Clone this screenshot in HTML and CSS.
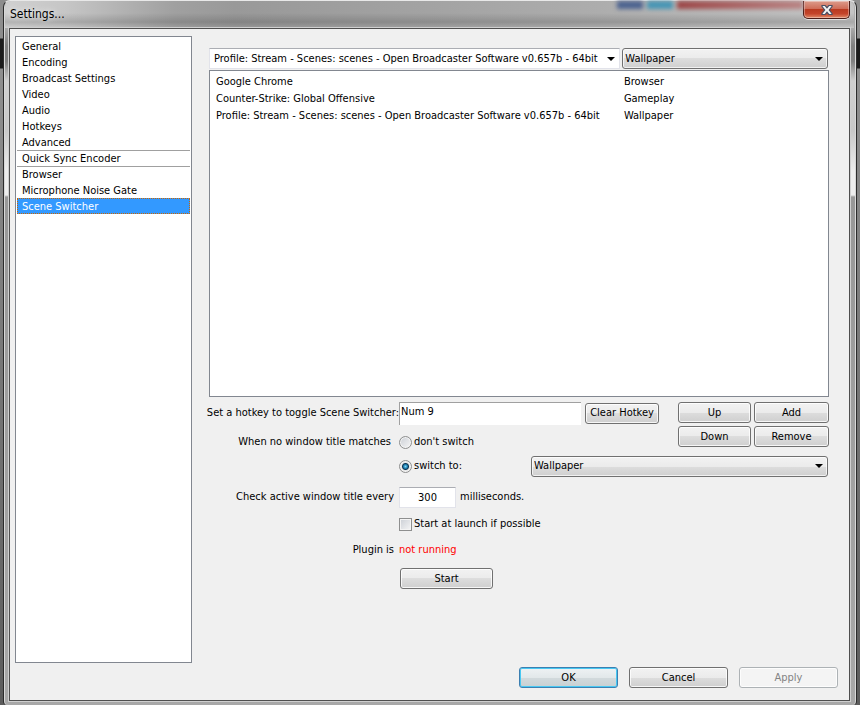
FILE: index.html
```html
<!DOCTYPE html>
<html lang="en">

<head>
    <meta charset="utf-8">
    <meta name="viewport" content="width=device-width, initial-scale=1.0">
    <title>Settings</title>
    <link rel="stylesheet" href="styles.css">
</head>

<body>
    <div class="window">
        <header class="titlebar">
            <h1>Settings...</h1>
            <div class="glow">
                <span class="glow-blue"></span>
                <span class="glow-teal"></span>
                <span class="glow-red"></span>
            </div>
            <button class="close" type="button" aria-label="Close">
                <svg width="14" height="12" viewBox="0 0 14 12">
                    <path d="M2 1.5h3.2L7 3.7l1.8-2.2H12v1L9.3 6l2.7 3.5v1H8.8L7 8.3l-1.8 2.2H2v-1L4.7 6 2 2.5z" fill="#f4f4f4" stroke="#4a4f63" stroke-width="1.2" />
                </svg>
            </button>
        </header>

        <form class="client">
            <div class="content">
                <nav class="sidebar">
                    <a href="#">General</a>
                    <a href="#">Encoding</a>
                    <a href="#">Broadcast Settings</a>
                    <a href="#">Video</a>
                    <a href="#">Audio</a>
                    <a href="#">Hotkeys</a>
                    <a href="#">Advanced</a>
                    <a href="#" class="separated">Quick Sync Encoder</a>
                    <a href="#">Browser</a>
                    <a href="#">Microphone Noise Gate</a>
                    <a href="#" class="selected">Scene Switcher</a>
                </nav>

                <main class="panel">
                    <div class="pickers">
                        <select class="combo flat" aria-label="Window">
                            <option>Profile: Stream - Scenes: scenes - Open Broadcaster Software v0.657b - 64bit</option>
                        </select>
                        <select class="combo" aria-label="Scene">
                            <option>Wallpaper</option>
                        </select>
                    </div>

                    <div class="list">
                        <table>
                            <tr>
                                <td>Google Chrome</td>
                                <td>Browser</td>
                            </tr>
                            <tr>
                                <td>Counter-Strike: Global Offensive</td>
                                <td>Gameplay</td>
                            </tr>
                            <tr>
                                <td>Profile: Stream - Scenes: scenes - Open Broadcaster Software v0.657b - 64bit</td>
                                <td>Wallpaper</td>
                            </tr>
                        </table>
                    </div>

                    <div class="top">
                        <div class="rows">
                            <div class="row">
                                <label class="caption tight" for="hotkey">Set a hotkey to toggle Scene Switcher:</label>
                                <input class="hotkey" id="hotkey" type="text" value="Num 9">
                                <button class="clear" type="button">Clear Hotkey</button>
                            </div>
                            <div class="row">
                                <span class="caption wide">When no window title matches</span>
                                <label class="choice"><input type="radio" name="nomatch">don't switch</label>
                            </div>
                        </div>
                        <div class="actions">
                            <button type="button">Up</button>
                            <button type="button">Add</button>
                            <button type="button">Down</button>
                            <button type="button">Remove</button>
                        </div>
                    </div>

                    <div class="row">
                        <span class="caption"></span>
                        <label class="choice switch"><input type="radio" name="nomatch" checked>switch to:</label>
                        <select class="combo target" aria-label="Switch to scene">
                            <option>Wallpaper</option>
                        </select>
                    </div>
                    <div class="row interval">
                        <label class="caption" for="interval">Check active window title every</label>
                        <input class="number" id="interval" type="text" value="300">
                        <span>milliseconds.</span>
                    </div>
                    <div class="row">
                        <span class="caption"></span>
                        <label class="choice"><input type="checkbox">Start at launch if possible</label>
                    </div>
                    <div class="row">
                        <span class="caption">Plugin is</span>
                        <span class="status">not running</span>
                    </div>
                    <div class="row">
                        <span class="caption"></span>
                        <button class="start" type="button">Start</button>
                    </div>
                </main>
            </div>

            <footer class="buttons">
                <button class="default" type="button">OK</button>
                <button type="button">Cancel</button>
                <button type="button" disabled>Apply</button>
            </footer>
        </form>
    </div>
</body>

</html>
```
FILE: styles.css
```css
* {
    box-sizing: border-box;
}

body {
    margin: 0;
    height: 100vh;
    padding: 0 3px;
    background: linear-gradient(#8d8d8d 0, #8d8d8d 38px, #1c1c1c 39px, #1c1c1c 68px, #8f8f8f 69px, #858585 190px, #5c5c5c 100%);
    font-family: Tahoma, "DejaVu Sans Condensed", "DejaVu Sans", sans-serif;
    font-size: 11px;
    line-height: 16px;
    color: #000;
}

/* glass frame */
.window {
    height: 100%;
    display: flex;
    flex-direction: column;
    padding: 0 6px 4px 5px;
    border: 1px solid #2b2b2b;
    border-top-color: #e8e8e8;
    border-bottom: 0;
    border-radius: 7px 7px 4px 4px;
    background: linear-gradient(#b4b4b4 0, #a8a8a8 28px, #808080 45px, #808080 60px, #d0d0d0 80px, #c8c8c8 130px, #ededed 170px, #ededed 194px, #989898 196px, #a8a8a8 100%);
    box-shadow: inset 1px 0 #d8d8d8, inset -1px 0 #d8d8d8;
}

.titlebar {
    height: 27px;
    flex: none;
    margin: 0 -4px;
    padding-left: 5px;
    display: flex;
    align-items: flex-start;
    border-radius: 6px 6px 0 0;
    background:
        linear-gradient(transparent 12px, rgba(0, 0, 0, .14) 21px, transparent 27px),
        linear-gradient(90deg, #d0d0d0, #c6c6c6 60px, #a0a0a0 170px, #999999 230px, #a3a3a3 50%, #adadad 70%, #c4c4c4);
}

.titlebar h1 {
    margin: 0;
    font-size: 12px;
    font-weight: normal;
    line-height: 26px;
    text-shadow: 0 0 6px #fff;
}

.glow {
    display: flex;
    flex: 1;
    gap: 4px;
    justify-content: flex-end;
    height: 8px;
    filter: blur(2px);
}

.glow-blue {
    width: 26px;
    background: #4d6390;
}

.glow-teal {
    width: 26px;
    background: #4796b5;
}

.glow-red {
    width: 126px;
    background: linear-gradient(90deg, #9c4546, #b98484);
}

.close {
    width: 47px;
    height: 18px;
    margin-right: 4px;
    padding: 0;
    display: flex;
    align-items: center;
    justify-content: center;
    border: 1px solid #4b1d18;
    border-top: 0;
    border-radius: 0 0 5px 5px;
    background: linear-gradient(#dc9c8c, #cf6d58 45%, #b93a20 50%, #c4442a 75%, #e08a68);
    box-shadow: inset 0 0 0 1px rgba(255, 255, 255, .35), 0 1px rgba(255, 255, 255, .6);
}

.client {
    flex: 1;
    display: flex;
    flex-direction: column;
    gap: 4px;
    padding: 7px 11px 12px 5px;
    border: 1px solid #4f4f4f;
    background: #f0f0f0;
    box-shadow: 0 0 0 1px #cfcfcf;
}

.content {
    flex: 1;
    display: flex;
    gap: 17px;
}

.sidebar {
    width: 177px;
    padding: 1px;
    border: 1px solid #828790;
    background: #fff;
}

.sidebar a {
    display: block;
    height: 16px;
    padding: 1px 0 0 5px;
    color: #000;
    text-decoration: none;
}

.sidebar .separated {
    box-shadow: inset 0 1px #a0a0a0, 0 1px #a0a0a0;
}

.sidebar .selected {
    padding: 0 0 0 4px;
    border: 1px dotted #cc6600;
    background: #3399ff;
    color: #fff;
}

.panel {
    flex: 1;
    padding: 12px 9px 0 0;
}

button {
    height: 21px;
    padding: 0;
    border: 1px solid #707070;
    border-radius: 3px;
    background: linear-gradient(#f2f2f2, #ebebeb 50%, #dddddd 50%, #cfcfcf);
    box-shadow: inset 0 0 0 1px rgba(255, 255, 255, .8);
    font: inherit;
    color: #000;
}

button:disabled {
    border-color: #adb2b5;
    background: #f4f4f4;
    color: #838383;
}

input[type="text"] {
    font: inherit;
    color: #000;
    background: #fff;
}

.combo {
    appearance: none;
    height: 21px;
    padding: 0 20px 0 2px;
    border: 1px solid #707070;
    border-radius: 3px;
    background:
        url("data:image/svg+xml,%3Csvg xmlns='http://www.w3.org/2000/svg' width='8' height='4'%3E%3Cpath d='M0 0h8L4 4z'/%3E%3C/svg%3E") no-repeat right 4px center,
        linear-gradient(#f2f2f2, #ebebeb 50%, #dddddd 50%, #cfcfcf);
    box-shadow: inset 0 0 0 1px rgba(255, 255, 255, .7);
    font: inherit;
    color: #000;
}

.flat {
    padding-left: 4px;
    border-color: #abadb3 #e2e3ea #e2e3ea;
    border-radius: 0;
    background-color: #fff;
    background-image: url("data:image/svg+xml,%3Csvg xmlns='http://www.w3.org/2000/svg' width='8' height='4'%3E%3Cpath d='M0 0h8L4 4z'/%3E%3C/svg%3E");
}

.pickers {
    display: grid;
    grid-template-columns: 2fr 1fr;
    gap: 2px;
    padding-right: 1px;
}

.list {
    height: 327px;
    margin: 1px 0 4px;
    padding-top: 2px;
    border: 1px solid #828790;
    background: #fff;
}

.list table {
    width: 100%;
    border-spacing: 0;
}

.list td {
    height: 17px;
    padding: 0 6px;
}

.list td:first-child {
    width: 66%;
}

.top {
    display: flex;
    justify-content: space-between;
}

.row {
    display: flex;
    align-items: center;
    min-height: 24px;
    margin-bottom: 2px;
}

.top .row {
    margin-bottom: 0;
}

.top .row:first-child {
    margin-bottom: 5px;
}

/* long captions spill to the left, never under the field */
.caption {
    display: flex;
    justify-content: flex-end;
    flex: none;
    width: 190px;
    padding-right: 5px;
    white-space: nowrap;
}

.tight {
    padding-right: 0;
}

.wide {
    padding-right: 8px;
}

.hotkey {
    width: 182px;
    height: 23px;
    padding: 0 1px 4px;
    border: 1px solid #a0a0a0;
    border-width: 1px 0 0 1px;
}

.clear {
    width: 74px;
    margin-left: 4px;
}

.actions {
    display: grid;
    grid-template-columns: 73px 75px;
    gap: 3px;
    align-content: start;
    padding-top: 1px;
}

.choice {
    display: flex;
    align-items: center;
    gap: 2px;
}

.choice input {
    appearance: none;
    width: 13px;
    height: 13px;
    margin: 0;
    border: 1px solid #8e8f8f;
    background: linear-gradient(135deg, #cbcfd5, #f6f6f6);
    box-shadow: inset 0 0 0 1px #f4f4f4;
}

.choice input[type="radio"] {
    border-radius: 50%;
}

.choice input[type="radio"]:checked {
    background: radial-gradient(circle at 50% 50%, #7fd6f5 0, #1b7cae 2px, #0b3350 3px, #e6e6e6 4px);
}

.switch {
    flex: 1;
}

.target {
    width: 297px;
    margin-right: 1px;
}

.interval {
    margin: 7px 0 3px;
}

.number {
    width: 57px;
    height: 21px;
    margin-right: 4px;
    border: 1px solid #e2e3ea;
    border-top-color: #abadb3;
    text-align: center;
}

.status {
    color: #f00;
}

.start {
    width: 93px;
    margin: 4px 1px;
}

.buttons {
    display: flex;
    justify-content: flex-end;
    gap: 11px;
}

.buttons button {
    width: 99px;
}

.buttons .default {
    border-color: #3c7fb1;
    background: linear-gradient(#eef2f4, #e2e8ea 50%, #d2dadd 50%, #c8d0d2);
    box-shadow: inset 0 0 0 1px #48c8f2;
}
```
